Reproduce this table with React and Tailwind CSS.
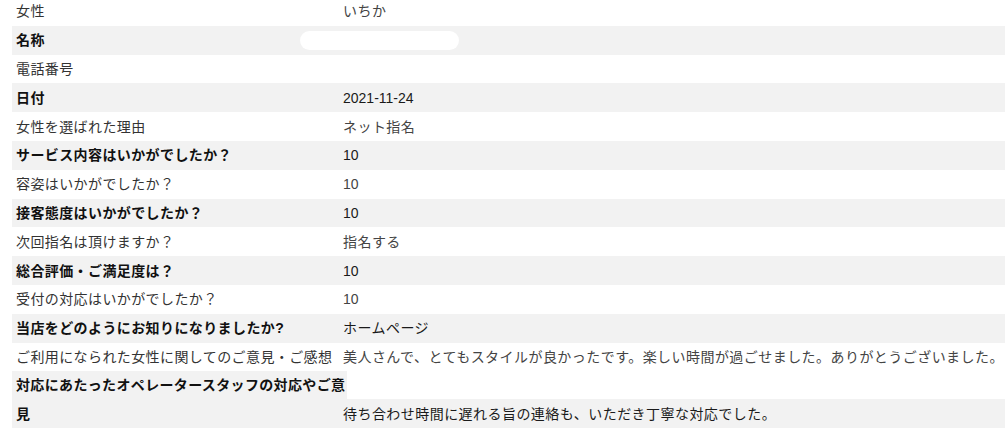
import React from "react";

const rows = [
  { label: "女性", value: "いちか" },
  { label: "名称", value: "", pill: true },
  { label: "電話番号", value: "" },
  { label: "日付", value: "2021-11-24", num: true },
  { label: "女性を選ばれた理由", value: "ネット指名" },
  { label: "サービス内容はいかがでしたか？", value: "10", num: true },
  { label: "容姿はいかがでしたか？", value: "10", num: true },
  { label: "接客態度はいかがでしたか？", value: "10", num: true },
  { label: "次回指名は頂けますか？", value: "指名する" },
  { label: "総合評価・ご満足度は？", value: "10", num: true },
  { label: "受付の対応はいかがでしたか？", value: "10", num: true },
  { label: "当店をどのようにお知りになりましたか?", value: "ホームページ" },
  {
    label: "ご利用になられた女性に関してのご意見・ご感想",
    value:
      "美人さんで、とてもスタイルが良かったです。楽しい時間が過ごせました。ありがとうございました。",
  },
];

export default function App() {
  return (
    <div
      className="w-[1005px] h-[429px] overflow-hidden bg-white text-[14px]"
      style={{ fontFamily: '"Liberation Sans", "Noto Sans CJK JP", sans-serif' }}
    >
      <div className="-mt-[3px] pl-[12px]">
        {rows.map((r, i) => {
          const gray = i % 2 === 1;
          return (
            <div
              key={i}
              className={`flex h-[28.8px] items-center leading-[20px] whitespace-nowrap ${
                gray ? "bg-[#f2f2f2]" : "bg-white"
              }`}
            >
              <div
                className={`w-[331px] shrink-0 pl-[4px] tracking-[0.4px] ${
                  gray ? "font-bold text-[#111]" : "text-[#333]"
                }`}
              >
                {r.label}
              </div>
              <div
                className={`relative flex-1 ${r.num ? "" : "tracking-[0.45px]"} ${
                  gray ? "text-[#1a1a1a]" : "text-[#444]"
                }`}
              >
                {r.pill ? (
                  <div className="absolute left-[-43px] top-[-9px] h-[19px] w-[159px] rounded-full bg-white" />
                ) : (
                  r.value
                )}
              </div>
            </div>
          );
        })}
        <div className="flex h-[28px] items-center whitespace-nowrap">
          <div className="flex h-full w-[335px] shrink-0 items-center bg-[#f2f2f2] pl-[4px] font-bold leading-[20px] tracking-[0.35px] text-[#111]">
            対応にあたったオペレータースタッフの対応やご意
          </div>
          <div className="flex-1" />
        </div>
        <div className="flex h-[29px] items-center bg-[#f2f2f2] leading-[20px] whitespace-nowrap">
          <div className="w-[331px] shrink-0 pl-[4px] font-bold tracking-[0.4px] text-[#111]">
            見
          </div>
          <div className="flex-1 tracking-[0.45px] text-[#1a1a1a]">
            待ち合わせ時間に遅れる旨の連絡も、いただき丁寧な対応でした。
          </div>
        </div>
      </div>
    </div>
  );
}
